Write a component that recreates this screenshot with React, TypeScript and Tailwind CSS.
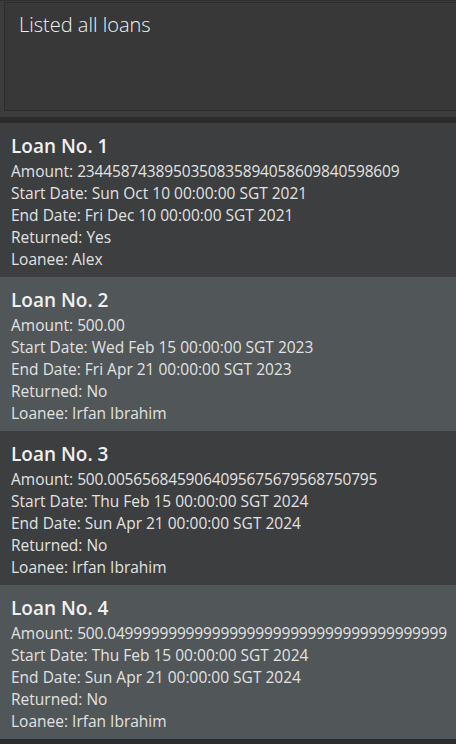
import React from "react";

const loans = [
  { n: 1, amount: "2344587438950350835894058609840598609", start: "Sun Oct 10 00:00:00 SGT 2021", end: "Fri Dec 10 00:00:00 SGT 2021", ret: "Yes", loanee: "Alex" },
  { n: 2, amount: "500.00", start: "Wed Feb 15 00:00:00 SGT 2023", end: "Fri Apr 21 00:00:00 SGT 2023", ret: "No", loanee: "Irfan Ibrahim" },
  { n: 3, amount: "500.0056568459064095675679568750795", start: "Thu Feb 15 00:00:00 SGT 2024", end: "Sun Apr 21 00:00:00 SGT 2024", ret: "No", loanee: "Irfan Ibrahim" },
  { n: 4, amount: "500.04" + "9".repeat(37), start: "Thu Feb 15 00:00:00 SGT 2024", end: "Sun Apr 21 00:00:00 SGT 2024", ret: "No", loanee: "Irfan Ibrahim" },
];

export default function App() {
  return (
    <div className="w-[456px] h-[744px] overflow-hidden bg-[#3c3c3c] flex flex-col" style={{ fontFamily: '"Open Sans", "Noto Sans", sans-serif' }}>
      <div className="h-[117px] pl-[4px] pt-[1px] pb-[6px] border-t border-[#2e2e2e] flex flex-col">
        <div className="flex-1 bg-[#383838] border border-[#2c2c2c] border-r-0 px-[14px] pt-[8px]">
          <div className="text-[20px] font-light text-[#f2f2f2] leading-[28px]">Listed all loans</div>
        </div>
      </div>
      <div className="h-[6px] bg-[#2b2b2b]" />
      <div className="flex flex-col">
        {loans.map((l, i) => (
          <div key={l.n} className={`h-[154px] px-[11px] pt-[9px] whitespace-nowrap ${i % 2 === 0 ? "bg-[#3c3e40]" : "bg-[#515658]"}`}>
            <div className="text-[19px] font-semibold text-[#f0f0f0] leading-[28px]">Loan No. {l.n}</div>
            <div className="text-[15.5px] text-[#e2e2e2] leading-[22px]">
              <div>Amount: <span className="tracking-[-0.15px]">{l.amount}</span></div>
              <div>Start Date: {l.start}</div>
              <div>End Date: {l.end}</div>
              <div>Returned: {l.ret}</div>
              <div>Loanee: {l.loanee}</div>
            </div>
          </div>
        ))}
      </div>
      <div className="flex-1 bg-[#2b2b2b]" />
    </div>
  );
}
